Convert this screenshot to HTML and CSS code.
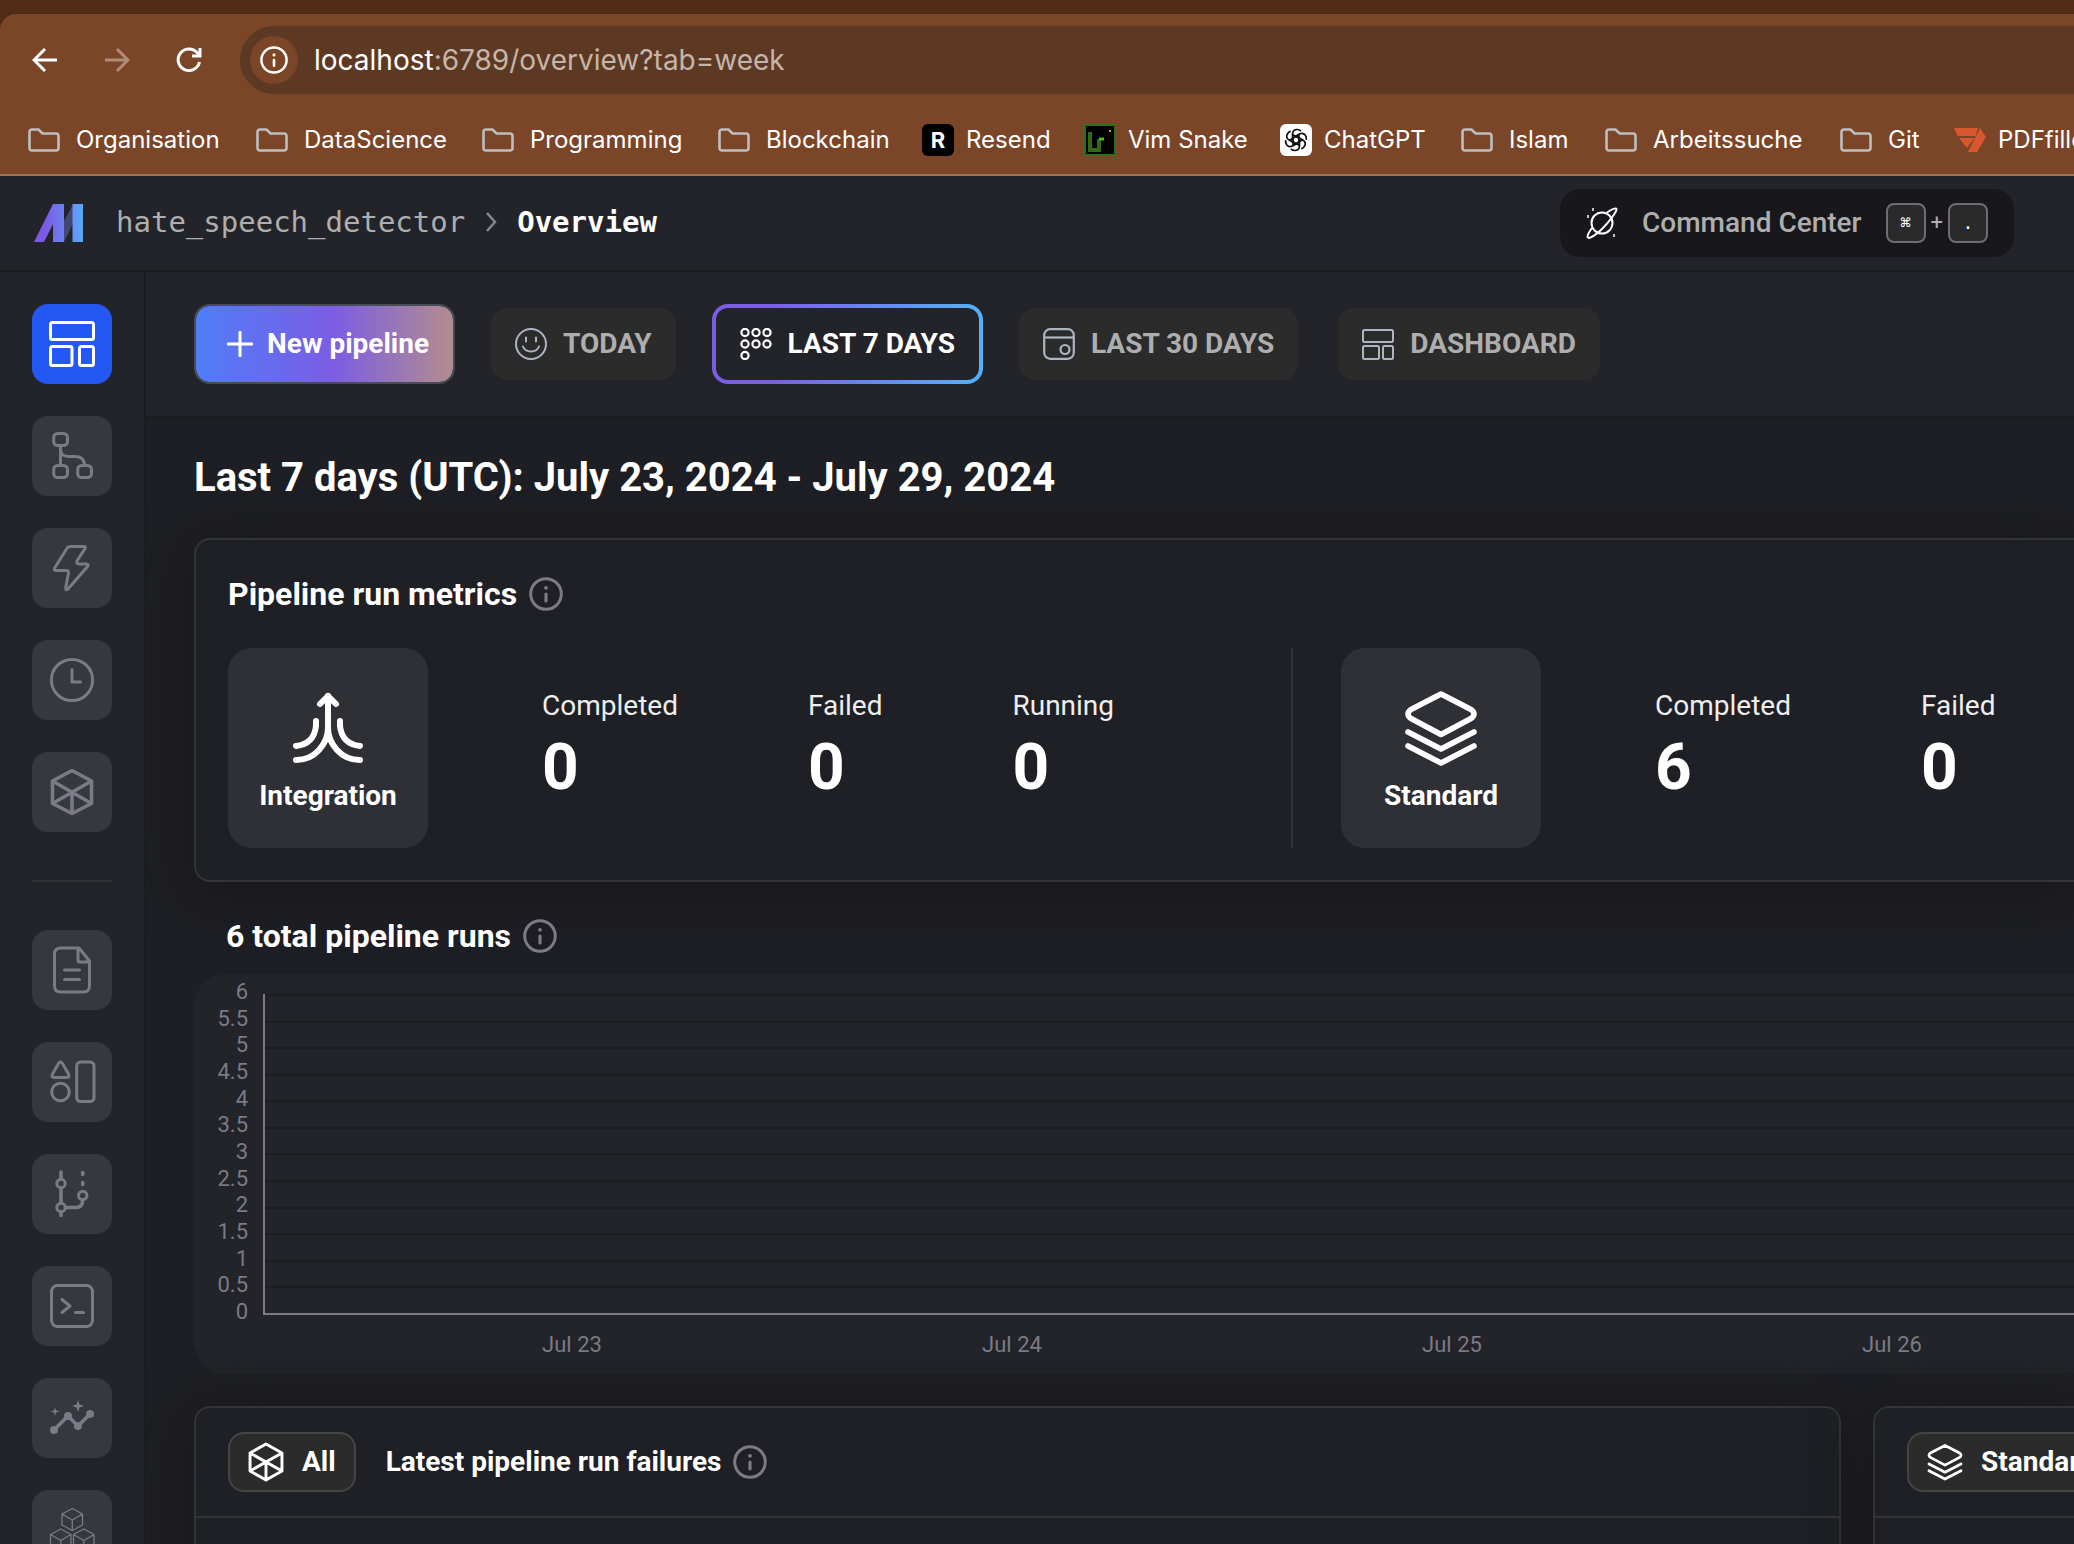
FILE: index.html
```html
<!DOCTYPE html>
<html lang="en">
<head>
<meta charset="utf-8">
<title>Overview</title>
<link rel="stylesheet" href="styles.css">
</head>
<body>
<svg class="defs" aria-hidden="true">
  <symbol id="folder" viewBox="0 0 32 24"><path d="M4 1.5H10.500L14.500 5.500H28Q30.500 5.500 30.500 8V20Q30.500 22.500 28 22.500H4Q1.500 22.500 1.500 20V4Q1.500 1.500 4 1.500Z" fill="none" stroke="currentColor" stroke-width="2.600"/></symbol>
  <symbol id="info" viewBox="0 0 34 34"><circle cx="17" cy="17" r="15.300" fill="none" stroke="currentColor" stroke-width="3"/><circle cx="17" cy="10.800" r="1.900" fill="currentColor"/><path d="M17 17V24" stroke="currentColor" stroke-width="3.200" stroke-linecap="round"/></symbol>
  <symbol id="hex" viewBox="0 0 44 48"><path d="M22 2L41.500 13V35L22 46L2.500 35V13ZM2.500 13L41.500 35M41.500 13L2.500 35M22 24V46" fill="none" stroke="currentColor" stroke-width="3.600" stroke-linejoin="round"/></symbol>
  <symbol id="layers" viewBox="0 0 74 76"><g fill="none" stroke="currentColor" stroke-width="5.600" stroke-linecap="round" stroke-linejoin="round"><path d="M37 4L67 19.500Q73 24 67 28.500L37 44.500L7 28.500Q1 24 7 19.500Z"/><path d="M4 42L37 59L70 42"/><path d="M4 56L37 73L70 56"/></g></symbol>
  <symbol id="dashboard" viewBox="0 0 32 32"><g fill="none" stroke="currentColor" stroke-width="2"><rect x="1" y="2" width="30" height="12" rx="1.500"/><rect x="1" y="18" width="16" height="13" rx="1.500"/><rect x="21" y="18" width="10" height="13" rx="1.500"/></g></symbol>
</svg>

<div class="browser">
  <div class="toolbar">
    <button class="nav" aria-label="Back"><svg width="26" height="26" viewBox="0 0 26 26"><path d="M25 13H3M13 2L2 13L13 24"/></svg></button>
    <button class="nav nav-off" aria-label="Forward"><svg width="26" height="26" viewBox="0 0 26 26"><path d="M1 13H23M13 2L24 13L13 24"/></svg></button>
    <button class="nav" aria-label="Reload"><svg width="26" height="26" viewBox="0 0 26 26"><path d="M23.500 15A10.800 10.800 0 1 1 21 5.500L24 8.500M24 1V9H16"/></svg></button>
    <div class="address">
      <span class="site-info"><svg width="28" height="28"><use href="#info"/></svg></span>
      <span class="url"><b>localhost</b>:6789/overview?tab=week</span>
    </div>
  </div>
  <nav class="bookmarks">
    <a href="#"><svg width="32" height="24"><use href="#folder"/></svg>Organisation</a>
    <a href="#"><svg width="32" height="24"><use href="#folder"/></svg>DataScience</a>
    <a href="#"><svg width="32" height="24"><use href="#folder"/></svg>Programming</a>
    <a href="#"><svg width="32" height="24"><use href="#folder"/></svg>Blockchain</a>
    <a href="#" class="site"><span class="resend">R</span>Resend</a>
    <a href="#" class="site"><svg width="32" height="32" viewBox="0 0 32 32"><rect x="1" y="1" width="30" height="30" fill="#000" stroke="#2a6f1b" stroke-width="2"/><path d="M6 8V26H15V15" fill="none" stroke="#2f6b14" stroke-width="4"/><path d="M15 15H20" stroke="#45c01e" stroke-width="3"/><rect x="25" y="6" width="2" height="2" fill="#d8902a"/></svg>Vim Snake</a>
    <a href="#" class="site"><svg width="32" height="32" viewBox="0 0 32 32"><rect width="32" height="32" rx="6" fill="#fff"/><g fill="none" stroke="#111" stroke-width="1.700"><path id="petal" d="M12.500 18V10.500Q12.500 6 16.500 5.500Q19 5.300 21 7M12.500 10.500L18.500 14"/><use href="#petal" transform="rotate(60 16 16)"/><use href="#petal" transform="rotate(120 16 16)"/><use href="#petal" transform="rotate(180 16 16)"/><use href="#petal" transform="rotate(240 16 16)"/><use href="#petal" transform="rotate(300 16 16)"/></g></svg>ChatGPT</a>
    <a href="#"><svg width="32" height="24"><use href="#folder"/></svg>Islam</a>
    <a href="#"><svg width="32" height="24"><use href="#folder"/></svg>Arbeitssuche</a>
    <a href="#"><svg width="32" height="24"><use href="#folder"/></svg>Git</a>
    <a href="#" class="site"><svg width="32" height="32" viewBox="0 0 32 32"><path d="M0 4H24L21.500 12H3.500ZM5 14H20.500L13 24ZM26 4L32 13L23 28H14Z" fill="#d9572f"/></svg>PDFfiller</a>
  </nav>
</div>

<header class="header">
  <svg width="50" height="38" viewBox="0 0 50 38"><defs><linearGradient id="mage"><stop offset="0.200" stop-color="#7d58e6"/><stop offset="1" stop-color="#5aa9fb"/></linearGradient></defs><path d="M30 17L39 0V20L30 38Z" fill="#444673"/><path d="M0 38L19 0H30V38H19V20L10 38ZM38.500 0H49V38H38.500Z" fill="url(#mage)"/></svg>
  <nav class="crumbs"><a href="#">hate_speech_detector</a><svg width="12" height="20" viewBox="0 0 12 20"><path d="M2 1L10 10L2 19" fill="none" stroke="#85858c" stroke-width="2.500"/></svg><a href="#" class="current">Overview</a></nav>
  <button class="command"><svg width="32" height="32" viewBox="0 0 32 32"><g fill="none" stroke="#fff" stroke-width="2"><circle cx="16" cy="16" r="10.500"/><path d="M21 5.500C26 2 30 0.500 30.500 2C31 4 24 14 16 22C9 29 3 32 1.800 30.500C1 29 3 25 6 21"/></g><path d="M7 1V4M2 8V11M28 27V30" stroke="#fff" stroke-width="1.500"/></svg><span>Command Center</span><span class="keys"><kbd>⌘</kbd>+<kbd>.</kbd></span></button>
</header>

<div class="app">
  <aside class="sidebar">
    <button class="active" aria-label="Overview"><svg viewBox="0 0 80 80"><rect x="18.500" y="18.500" width="43" height="17" rx="2"/><rect x="18.500" y="42.500" width="21.500" height="19" rx="2"/><rect x="47.500" y="42.500" width="14" height="19" rx="2"/></svg></button>
    <button aria-label="Pipelines"><svg viewBox="0 0 80 80"><rect x="21.700" y="17.500" width="13.800" height="12" rx="4"/><rect x="21.700" y="49.500" width="13.800" height="12" rx="4"/><rect x="45.700" y="49.500" width="13.800" height="12" rx="4"/><path d="M28.500 30V49M28.500 33Q29 40.500 36 40.500H43Q52 40.500 52.600 49"/></svg></button>
    <button aria-label="Triggers"><svg viewBox="0 0 80 80"><path d="M38.500 18.500H52Q54 18.500 53 20.500L45 33Q44 36 47 36H54.500Q57 36 55.500 38.500L36 61Q33.500 63 33.700 60L36.500 45Q36.700 42.500 34 42.500H24Q21.500 42.500 22.700 40L34.500 21Q36 18.500 38.500 18.500Z"/></svg></button>
    <button aria-label="Pipeline runs"><svg viewBox="0 0 80 80"><circle cx="40" cy="40" r="20.600"/><path d="M40 29.500V42H48.500" stroke-linecap="round"/></svg></button>
    <button aria-label="Global data products"><svg viewBox="0 0 80 80"><path d="M40 18.500L59.500 29V51.500L40 61.500L20.500 51.500V29ZM20.500 29L59.500 51.500M59.500 29L20.500 51.500M40 40V61.500" stroke-width="3.600"/></svg></button>
    <hr>
    <button aria-label="Files"><svg viewBox="0 0 80 80"><path d="M47 18H29Q22.500 18 22.500 24V56Q22.500 62 29 62H51Q57.500 62 57.500 56V31ZM46 18V30Q46 32 48 32H57M32.500 40H47.500M32.500 49.500H47.500" stroke-linecap="round"/></svg></button>
    <button aria-label="Templates"><svg viewBox="0 0 80 80"><path d="M26.500 21.500Q28.500 18.500 30.500 21.500L36.500 32Q38 35.500 35 35.500H22Q19 35.500 20.500 32Z"/><circle cx="28.500" cy="50" r="8.800"/><rect x="44.700" y="20" width="17.300" height="39.500" rx="4"/></svg></button>
    <button aria-label="Version control"><svg viewBox="0 0 80 80"><circle cx="29" cy="29.500" r="4.200"/><circle cx="29" cy="53.500" r="4.200"/><circle cx="50.700" cy="41.500" r="4.200"/><path d="M29 18V25M29 34V49M29 58V61.500M33.500 53.500H44Q50.700 53.500 50.700 46M50.700 18.500V20.500M50.700 28.500V30.500" stroke-linecap="round" stroke-width="3.600"/></svg></button>
    <button aria-label="Terminal"><svg viewBox="0 0 80 80"><rect x="19.500" y="19.500" width="41" height="41" rx="6"/><path d="M30 33.500L38 40L30 46.500M43.500 46.500H51.500" stroke-linecap="round"/></svg></button>
    <button aria-label="Insights"><svg viewBox="0 0 80 80"><path d="M22 52L36 38L46 48L58 36" stroke-width="3.600"/><g fill="currentColor" stroke="none"><circle cx="22" cy="52" r="4"/><circle cx="36" cy="38" r="4"/><circle cx="46" cy="48" r="4"/><circle cx="58" cy="36" r="4"/><path d="M46 22L47.500 26.500L52 28L47.500 29.500L46 34L44.500 29.500L40 28L44.500 26.500ZM23 29L24 32.500L27.500 33.500L24 34.500L23 38L22 34.500L18.500 33.500L22 32.500Z"/></g></svg></button>
    <button aria-label="Compute"><svg viewBox="0 0 80 80"><g stroke-width="1.300"><path id="cube" d="M40.300 18.500L50.500 24V35L40.300 40.500L30 35V24ZM30 24L40.300 30L50.500 24M40.300 30V40.500"/><use href="#cube" x="-11.500" y="20.500"/><use href="#cube" x="11.500" y="20.500"/></g></svg></button>
  </aside>

  <main class="main">
    <div class="tabs">
      <button class="new"><svg width="26" height="26" viewBox="0 0 26 26"><path d="M13 1V25M1 13H25" stroke="#fff" stroke-width="3" stroke-linecap="round"/></svg>New pipeline</button>
      <button class="tab"><svg width="32" height="32" viewBox="0 0 32 32"><g fill="none" stroke="currentColor" stroke-width="2"><circle cx="16" cy="16" r="15"/><path d="M11 9.500V13.500M21 9.500V13.500M8 18.500Q10 23.500 16 23.500Q22 23.500 24 18.500" stroke-linecap="round"/></g></svg><span>TODAY</span></button>
      <button class="tab selected"><svg width="32" height="32" viewBox="0 0 32 32"><g fill="none" stroke="currentColor" stroke-width="2.200"><circle cx="5" cy="4.500" r="3.600"/><circle cx="16" cy="4.500" r="3.600"/><circle cx="27" cy="4.500" r="3.600"/><circle cx="5" cy="16" r="3.600"/><circle cx="16" cy="16" r="3.600"/><circle cx="27" cy="16" r="3.600"/><circle cx="5" cy="27.500" r="3.600"/></g></svg><span>LAST 7 DAYS</span></button>
      <button class="tab"><svg width="32" height="32" viewBox="0 0 32 32"><g fill="none" stroke="currentColor" stroke-width="2.200"><rect x="1.200" y="1.200" width="29.600" height="29.600" rx="6"/><path d="M1 9.500H31"/><circle cx="22" cy="21.500" r="4.500"/></g></svg><span>LAST 30 DAYS</span></button>
      <button class="tab"><svg width="32" height="32"><use href="#dashboard"/></svg><span>DASHBOARD</span></button>
    </div>

    <div class="content">
      <h1>Last 7 days (UTC): July 23, 2024 - July 29, 2024</h1>

      <section class="card metrics">
        <h2>Pipeline run metrics <svg width="34" height="34"><use href="#info"/></svg></h2>
        <div class="groups">
          <div class="group">
            <div class="tile"><svg width="76" height="76" viewBox="0 0 76 76"><g fill="none" stroke="#fff" stroke-width="6" stroke-linecap="round"><path d="M38 6V38Q38 50 29 60Q20 70 6 70M38 38Q38 50 47 60Q56 70 70 70M26 31V36Q24 54 6 56M50 31V36Q52 54 70 56"/><path d="M30 14L38 6L46 14" stroke-linejoin="round"/></g></svg>Integration</div>
            <dl><div><dt>Completed</dt><dd>0</dd></div><div><dt>Failed</dt><dd>0</dd></div><div><dt>Running</dt><dd>0</dd></div></dl>
          </div>
          <div class="group">
            <div class="tile"><svg width="76" height="76"><use href="#layers"/></svg>Standard</div>
            <dl><div><dt>Completed</dt><dd>6</dd></div><div><dt>Failed</dt><dd>0</dd></div></dl>
          </div>
        </div>
      </section>

      <h2 class="chart-title">6 total pipeline runs <svg width="34" height="34"><use href="#info"/></svg></h2>
      <section class="chart">
        <div class="y-axis"><span>6</span><span>5.5</span><span>5</span><span>4.5</span><span>4</span><span>3.5</span><span>3</span><span>2.5</span><span>2</span><span>1.5</span><span>1</span><span>0.5</span><span>0</span></div>
        <div class="plot"><i></i><i></i><i></i><i></i><i></i><i></i><i></i><i></i><i></i><i></i><i></i><i></i></div>
        <div class="x-axis"><span>Jul 23</span><span>Jul 24</span><span>Jul 25</span><span>Jul 26</span></div>
      </section>

      <div class="failures">
        <section class="card list">
          <h3><button class="pill"><svg width="36" height="40"><use href="#hex"/></svg>All</button>Latest pipeline run failures <svg width="34" height="34"><use href="#info"/></svg></h3>
        </section>
        <section class="card list cut">
          <h3><button class="pill"><svg width="36" height="38"><use href="#layers"/></svg>Standard</button></h3>
        </section>
      </div>
    </div>
  </main>
</div>
</body>
</html>
```
FILE: styles.css
```css
* { box-sizing: border-box; }
body {
  margin: 0;
  height: 100vh;
  display: flex;
  flex-direction: column;
  overflow: hidden;
  background: #1e1f24;
  color: #fff;
  font: 28px/32px Roboto, "Open Sans", sans-serif;
}
button { border: 0; padding: 0; margin: 0; background: none; color: inherit; font: inherit; white-space: nowrap; }
a { color: inherit; text-decoration: none; }
svg { display: block; flex: none; }
h1, h2, h3, dl, dd { margin: 0; }
.defs { position: absolute; width: 0; height: 0; }

/* browser window */
.browser { flex: none; background: #4f2b18; padding-top: 14px; font-family: Inter, "Liberation Sans", sans-serif; }
.toolbar { display: flex; align-items: center; height: 92px; padding-left: 32px; gap: 46px; background: #7b4527; border-top-left-radius: 16px; }
.nav svg { fill: none; stroke: #fff; stroke-width: 3; }
.nav-off svg { stroke: #b28c78; }
.address { flex: 1; display: flex; align-items: center; gap: 16px; height: 68px; margin-left: -8px; padding-left: 10px; border-radius: 34px 0 0 34px; background: #5d3923; font-size: 28px; color: #c6b5aa; }
.address b { font-weight: 400; color: #fff; }
.site-info { display: grid; place-items: center; width: 48px; height: 48px; border-radius: 50%; background: #7b4527; color: #fff; }
.bookmarks { display: grid; grid-template-columns: 228px 226px 236px 204px 162px 196px 181px 144px 235px 114px 1fr; align-items: center; height: 70px; padding-left: 28px; background: #7b4527; border-bottom: 2px solid #a07556; font-size: 24px; overflow: hidden; }
.bookmarks a { display: flex; align-items: center; gap: 16px; white-space: nowrap; }
.bookmarks .site { gap: 12px; }
.bookmarks svg { color: #bebebe; }
.resend { display: grid; place-items: center; width: 32px; height: 32px; border-radius: 6px; background: #000; font-size: 22px; font-weight: 700; }

/* app header */
.header { flex: none; display: flex; align-items: center; height: 96px; padding: 0 60px 0 34px; background: #232429; border-bottom: 2px solid #1b1c1f; }
.crumbs { display: flex; align-items: center; gap: 20px; margin-left: 32px; padding-bottom: 2px; font: 29px/40px "DejaVu Sans Mono", monospace; color: #aeaeae; }
.crumbs .current { color: #fff; font-weight: 700; }
.command { display: flex; align-items: center; height: 68px; margin-left: auto; padding: 0 26px; border-radius: 20px; background: #18171c; color: #aeaeae; font-weight: 500; }
.command svg { margin-right: 24px; }
.keys { display: flex; align-items: center; gap: 5px; margin-left: 24px; font-size: 22px; font-weight: 400; }
kbd { display: grid; place-items: center; width: 40px; height: 40px; border: 2px solid #6c6d76; border-radius: 8px; background: #2a2a2a; color: #fff; font: 18px/24px "DejaVu Sans Mono", monospace; }

.app { flex: 1; display: flex; min-height: 0; }
.sidebar { flex: none; position: relative; z-index: 1; display: flex; flex-direction: column; gap: 32px; width: 146px; padding: 32px 32px 0; background: #232429; border-right: 2px solid #1b1c1f; }
.sidebar button { flex: none; width: 80px; height: 80px; border-radius: 16px; background: #363840; color: #7b7a85; }
.sidebar .active { background: #2458f5; color: #fff; }
.sidebar svg { fill: none; stroke: currentColor; stroke-width: 3; stroke-linejoin: round; }
.sidebar hr { width: 80px; height: 2px; margin: 16px 0; border: 0; background: #2f3034; flex: none; }

.main { flex: 1; min-width: 0; display: flex; flex-direction: column; }
.tabs { flex: none; display: flex; align-items: center; gap: 32px; height: 146px; padding: 0 48px; background: #232429; border-bottom: 2px solid #1b1c1f; font-weight: 700; }
.new { display: flex; align-items: center; gap: 14px; height: 80px; padding: 0 24px 0 31px; border: 2px solid #484c56; border-radius: 16px; background: linear-gradient(90deg, #4f7df8, #7b5de4 53%, #b48c8e) padding-box; }
.tab { display: flex; align-items: center; gap: 16px; height: 72px; margin: 0 4px; padding: 0 24px; border-radius: 16px; background: #2b2b2b; color: #aeaeae; }
.tab svg { color: #aeb4c0; }
.selected { height: 80px; margin: 0; border: 4px solid transparent; background: linear-gradient(#232429, #232429) padding-box, linear-gradient(90deg, #7b5de4 20%, #55aef9 95%) border-box; color: #fff; }
.selected svg { color: #fff; }

.content { padding: 36px 0 0 48px; }
h1 { font-size: 40px; line-height: 48px; font-weight: 700; }
.card { border: 2px solid #333438; border-radius: 16px; background: #1f2025; box-shadow: 0 10px 60px #17171a; }
h2 { display: flex; align-items: center; gap: 12px; font-size: 32px; line-height: 40px; font-weight: 700; }
h2 svg, h3 > svg { color: #7b7a85; }
.metrics { margin-top: 36px; padding: 34px 0 32px 32px; border-right: 0; border-radius: 16px 0 0 16px; overflow: hidden; }
.groups { display: flex; margin-top: 34px; }
.group { display: flex; flex: none; align-items: center; }
.group + .group { margin-left: 177px; padding-left: 48px; border-left: 2px solid #333438; }
.tile { display: flex; flex-direction: column; align-items: center; justify-content: center; gap: 14px; width: 200px; height: 200px; padding-top: 6px; border-radius: 24px; background: #2f3035; font-weight: 700; }
dl { display: flex; gap: 130px; margin-left: 114px; }
dt { line-height: 40px; color: #eee; }
dd { font-size: 64px; line-height: 84px; font-weight: 700; }

.chart-title { margin: 34px 0 0 32px; }
.chart { display: grid; grid-template-columns: 69px 1fr; grid-template-rows: 321px 59px; height: 400px; margin-top: 18px; padding-top: 20px; border-radius: 32px 0 0 32px; background: #232429; color: #7b7a85; font-size: 22px; }
.y-axis { display: flex; flex-direction: column; justify-content: space-between; height: 344px; margin-top: -14px; padding-right: 15px; text-align: right; line-height: 24px; }
.plot { display: flex; flex-direction: column; border-left: 2px solid #7b7a85; border-bottom: 2px solid #7b7a85; }
.plot i { flex: 1; border-top: 2px solid #1c1d21; }
.x-axis { grid-column: 1 / -1; display: flex; padding-left: 158px; overflow: hidden; }
.x-axis span { flex: 0 0 440px; padding-top: 14px; text-align: center; }

.failures { display: grid; grid-template-columns: minmax(0, 1fr) 201px; gap: 32px; margin-top: 32px; }
.list { height: 400px; overflow: hidden; }
.cut { border-right: 0; border-radius: 16px 0 0 0; }
h3 { display: flex; align-items: center; gap: 12px; height: 110px; padding-left: 32px; border-bottom: 2px solid #333438; font-size: 28px; font-weight: 700; }
.pill { display: flex; flex: none; align-items: center; gap: 18px; height: 60px; margin-right: 18px; padding: 0 18px; border: 2px solid #444; border-radius: 16px; background: #2b2b2b; }
```
